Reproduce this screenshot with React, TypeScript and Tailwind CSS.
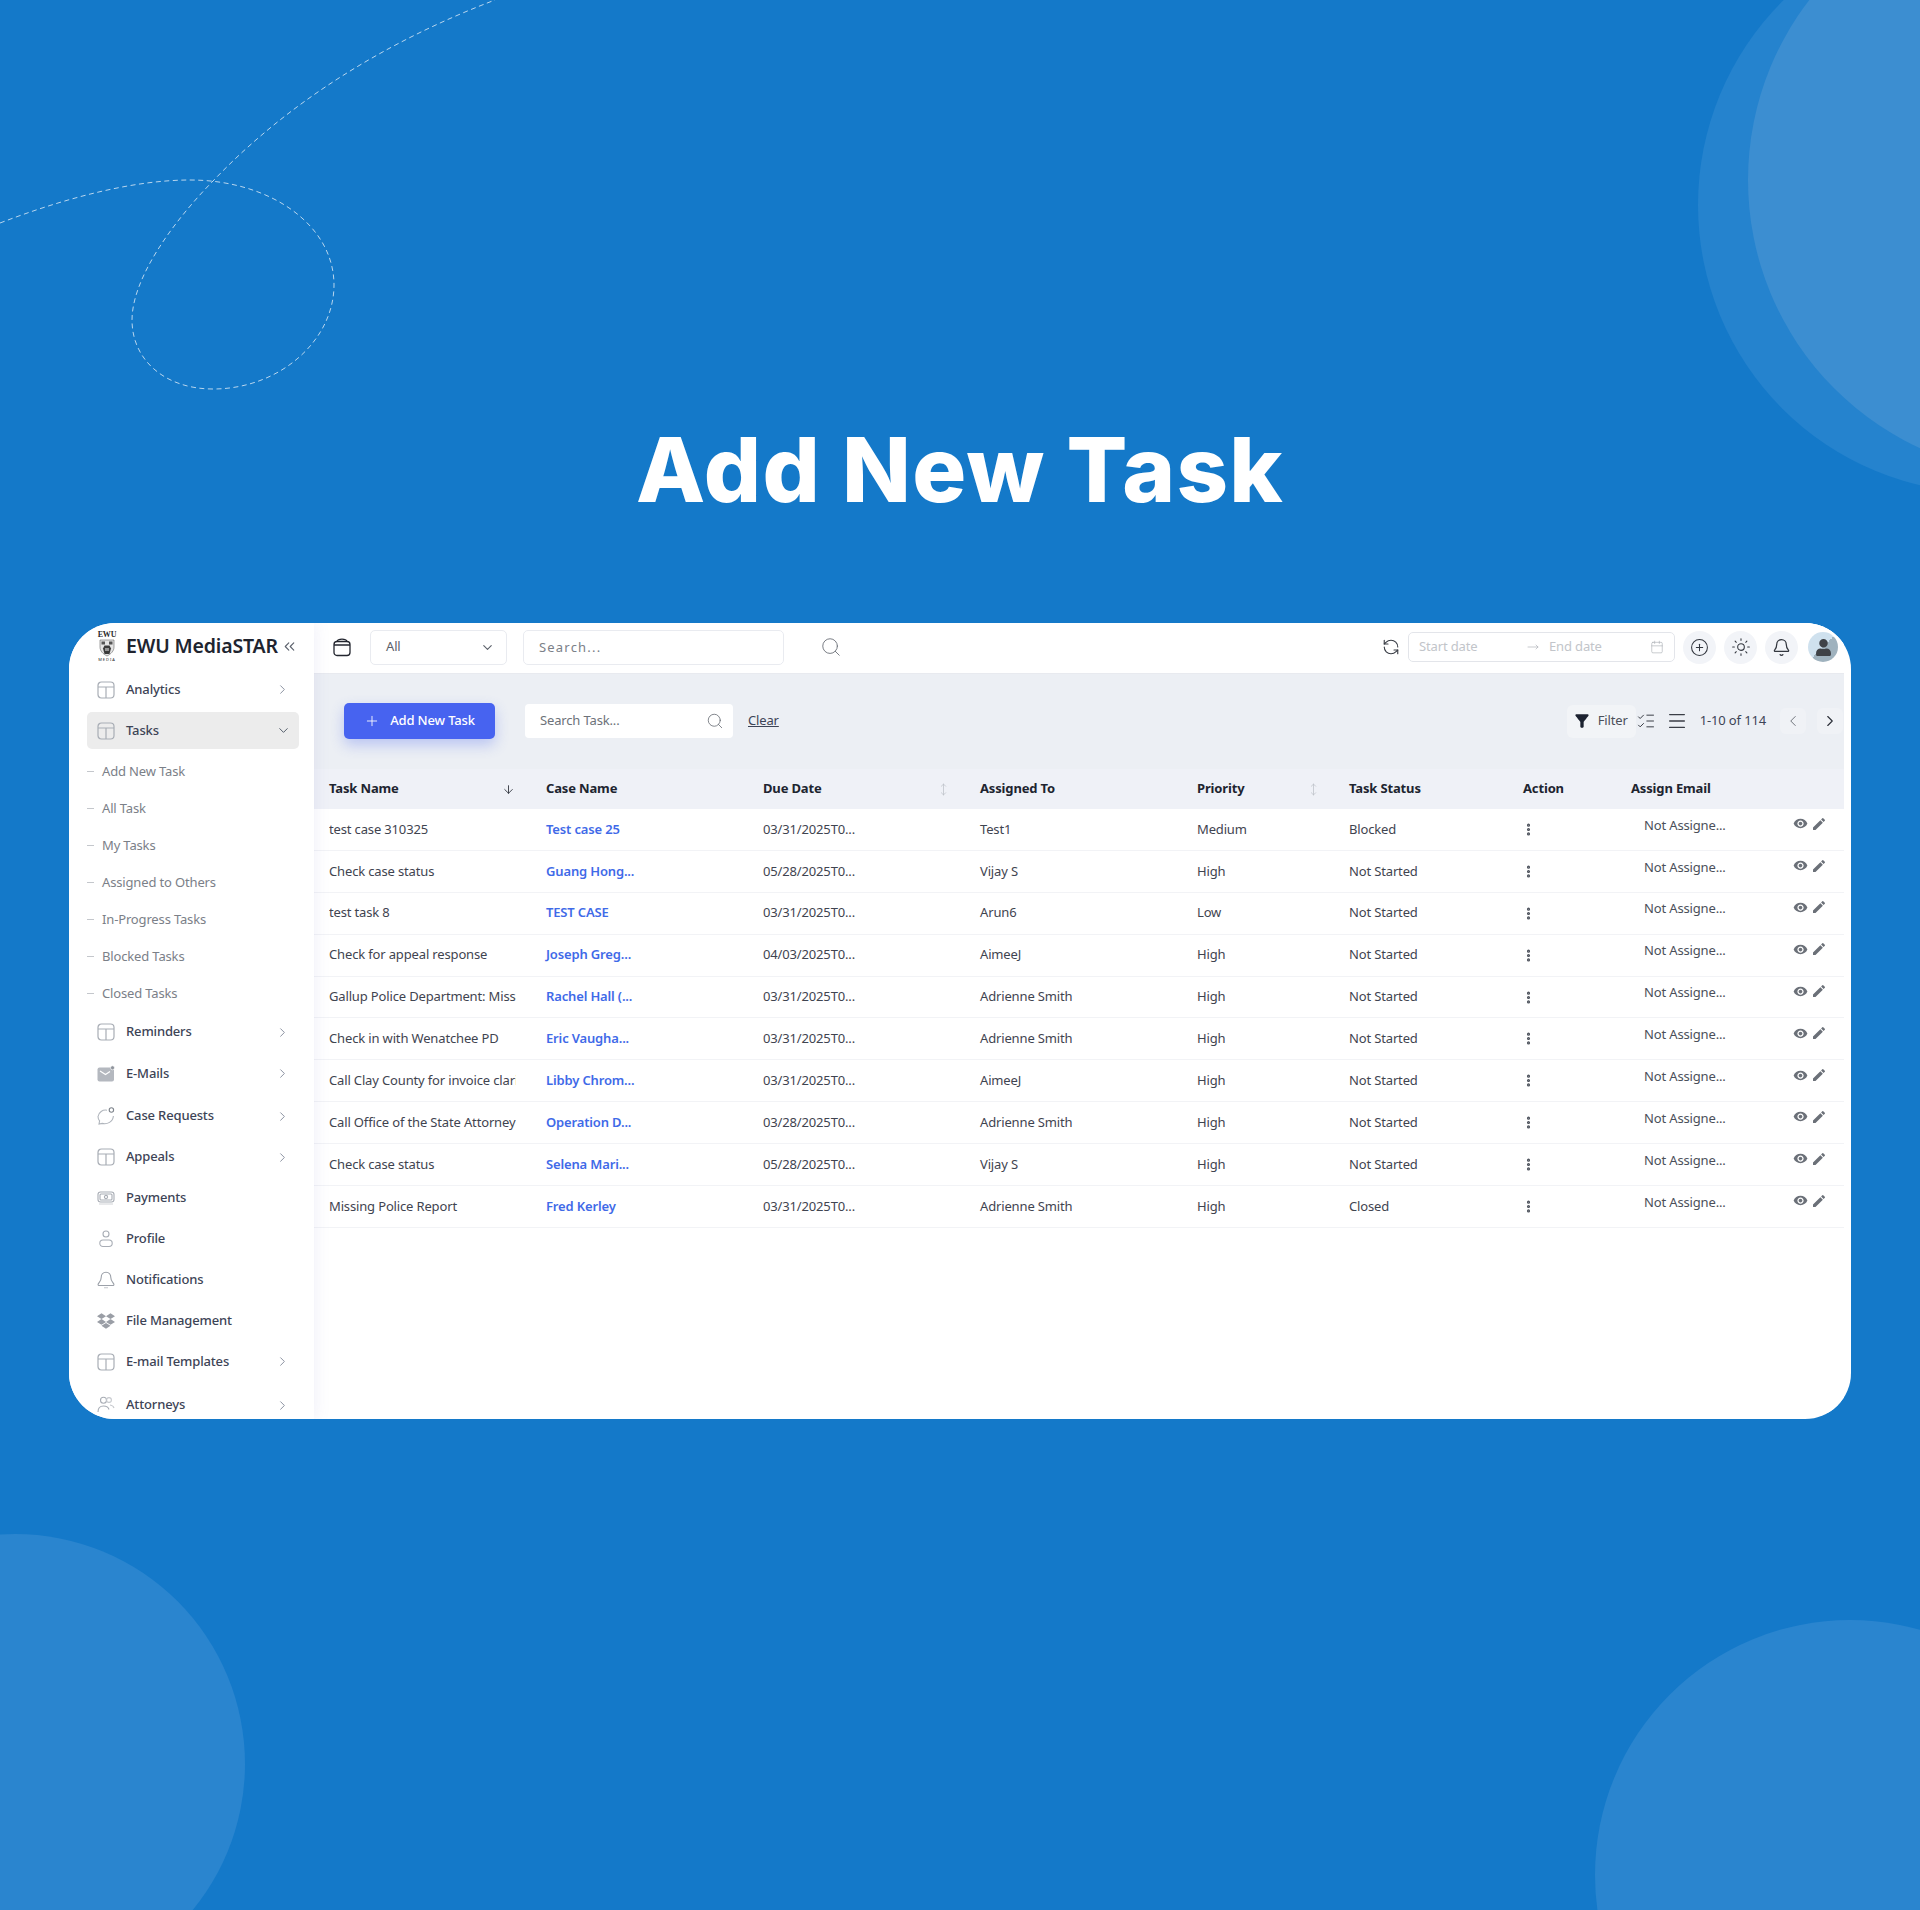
import React from "react";
import {
  ArrowDown, Bell, ChevronDown, ChevronLeft, ChevronRight, ChevronsLeft, CirclePlus, EllipsisVertical,
  ListChecks, Menu, MoveRight, MoveVertical, Plus, RefreshCcw, Search, Sun, Calendar,
} from "lucide-react";
import { FaDropbox, FaUser } from "react-icons/fa";
import { MdEdit, MdFilterAlt, MdVisibility } from "react-icons/md";

const TableIcon = () => (
  <svg width="18" height="18" viewBox="0 0 18 18" fill="none" stroke="#a8adb5" strokeWidth="1.2">
    <rect x="1" y="1" width="16" height="16" rx="3.5" />
    <path d="M1 6h16M9 6v11" />
  </svg>
);
const MailIcon = () => (
  <svg width="18" height="18" viewBox="0 0 18 18">
    <rect x="0.5" y="2.5" width="16.5" height="14" rx="2" fill="#b4b8bf" />
    <path d="M3 6l5.5 3.5L13 6.5" fill="none" stroke="#fff" strokeWidth="1.2" />
    <circle cx="15.5" cy="2.8" r="2" fill="#8f949c" stroke="#fff" strokeWidth="0.6" />
  </svg>
);
const BubbleIcon = () => (
  <svg width="18" height="18" viewBox="0 0 18 18" fill="none" stroke="#b0b5bc" strokeWidth="1.1">
    <path d="M10 3.2A7.6 7.6 0 0 0 1 9.5c0 2 .8 3.4 1.6 4.4L2 17l3.2-.6c5 1.3 10.8-1.6 11.2-7.4" />
    <circle cx="14.4" cy="3" r="2.2" stroke="#7e848c" />
  </svg>
);
const MoneyIcon = () => (
  <svg width="18" height="18" viewBox="0 0 18 18" fill="none" stroke="#a8adb5" strokeWidth="1.1">
    <rect x="1" y="3" width="16" height="10" rx="2.5" />
    <rect x="3" y="5" width="12" height="6" rx="1" />
    <circle cx="9" cy="8" r="1.6" />
    <path d="M2 15h14" stroke="#d5d7db" />
  </svg>
);
const ProfileIcon = () => (
  <svg width="18" height="18" viewBox="0 0 18 18" fill="none" stroke="#a8adb5" strokeWidth="1.1">
    <circle cx="9" cy="4" r="3" />
    <rect x="2.8" y="10" width="12.4" height="6.5" rx="3.2" />
  </svg>
);
const BellIcon = () => (
  <svg width="18" height="18" viewBox="0 0 18 18" fill="none" stroke="#9ca1a9" strokeWidth="1.1">
    <path d="M9 1.2c-3.2 0-4.8 2.4-4.8 5.200 0 3.600-2.200 5-3 6.600-.4.9.2 1.500 1 1.500h13.600c.8 0 1.400-.6 1-1.500-.8-1.600-3-3-3-6.600C13.800 3.600 12.200 1.200 9 1.200z" />
    <path d="M7 16.800h4" stroke="#c4c7cc" />
  </svg>
);
const PeopleIcon = () => (
  <svg width="18" height="18" viewBox="0 0 18 18" fill="none" stroke="#a8adb5" strokeWidth="1.1">
    <circle cx="6.500" cy="4.200" r="3" />
    <circle cx="12" cy="4" r="2.400" stroke="#c6c9ce" />
    <path d="M1 16c0-4 2.500-6 5.500-6s5 1.500 5.500 3.500" />
    <path d="M13 9c2 .3 3.500 1.200 4 3" stroke="#c6c9ce" />
  </svg>
);
const CardIcon = () => (
  <svg width="18" height="19" viewBox="0 0 18 19" fill="none" stroke="#23262f" strokeWidth="1.3">
    <rect x="1" y="3.500" width="16" height="14" rx="3" />
    <path d="M1 7h16" />
    <path d="M4 3.500C4.500 2 6 1.200 9 1.200s4.500.8 5 2.300" />
  </svg>
);
const Logo = () => (
  <div className="flex w-[20px] flex-col items-center leading-none text-[#2a2a2a]">
    <span className="text-[8px] font-bold leading-[8px] [font-family:'Liberation_Serif',serif]">EWU</span>
    <svg width="18" height="18" viewBox="0 0 17 18">
      <path d="M1.500 1h14v7c0 4-3 7-7 9C4.500 15 1.500 12 1.500 8z" fill="#e4e4e4" stroke="#666" strokeWidth="0.6" />
      <path d="M3 2.500h3.500v3H3zM10.500 2.500H14v3h-3.500z" fill="#555" />
      <path d="M6 6.500h5l1.500 3-1.500 5.500H6l-1.500-5.500z" fill="#3a3a3a" />
      <path d="M7 9h1v3H7zM9 9h1v3H9z" fill="#eee" />
    </svg>
    <span className="mt-[1px] text-[4px] leading-[4px] tracking-[1px]">MEDIA</span>
  </div>
);

type Item = { label: string; icon: React.ReactNode; h: string; chevron?: boolean };

const Row = ({ label, icon, h, chevron }: Item) => (
  <div className={`flex items-center pl-[28px] pr-[24px] ${h}`}>
    <span className="flex w-[18px] shrink-0 justify-center">{icon}</span>
    <span className="ml-[11px] flex-1 text-[13px] font-medium text-[#3d4456]">{label}</span>
    {chevron && <ChevronRight size={15} strokeWidth={1.4} className="text-[#7b8494]" />}
  </div>
);

const subItems = ["Add New Task", "All Task", "My Tasks", "Assigned to Others", "In-Progress Tasks", "Blocked Tasks", "Closed Tasks"];

const lower: Item[] = [
  { label: "Reminders", icon: <TableIcon />, h: "h-[40px]", chevron: true },
  { label: "E-Mails", icon: <MailIcon />, h: "h-[43px]", chevron: true },
  { label: "Case Requests", icon: <BubbleIcon />, h: "h-[42px]", chevron: true },
  { label: "Appeals", icon: <TableIcon />, h: "h-[40px]", chevron: true },
  { label: "Payments", icon: <MoneyIcon />, h: "h-[41px]" },
  { label: "Profile", icon: <ProfileIcon />, h: "h-[41px]" },
  { label: "Notifications", icon: <BellIcon />, h: "h-[41px]" },
  { label: "File Management", icon: <FaDropbox size={18} className="text-[#9a9ea6]" />, h: "h-[41px]" },
  { label: "E-mail Templates", icon: <TableIcon />, h: "h-[41px]", chevron: true },
  { label: "Attorneys", icon: <PeopleIcon />, h: "h-[46px]", chevron: true },
];

const rows = [
  ["test case 310325", "Test case 25", "03/31/2025T0...", "Test1", "Medium", "Blocked"],
  ["Check case status", "Guang Hong...", "05/28/2025T0...", "Vijay S", "High", "Not Started"],
  ["test task 8", "TEST CASE", "03/31/2025T0...", "Arun6", "Low", "Not Started"],
  ["Check for appeal response", "Joseph Greg...", "04/03/2025T0...", "AimeeJ", "High", "Not Started"],
  ["Gallup Police Department: Missi", "Rachel Hall (...", "03/31/2025T0...", "Adrienne Smith", "High", "Not Started"],
  ["Check in with Wenatchee PD", "Eric Vaugha...", "03/31/2025T0...", "Adrienne Smith", "High", "Not Started"],
  ["Call Clay County for invoice clari", "Libby Chrom...", "03/31/2025T0...", "AimeeJ", "High", "Not Started"],
  ["Call Office of the State Attorney", "Operation D...", "03/28/2025T0...", "Adrienne Smith", "High", "Not Started"],
  ["Check case status", "Selena Mari...", "05/28/2025T0...", "Vijay S", "High", "Not Started"],
  ["Missing Police Report", "Fred Kerley", "03/31/2025T0...", "Adrienne Smith", "High", "Closed"],
];

const cols = "grid grid-cols-[217px_217px_217px_217px_152px_174px_108px_213px] pl-[15px]";

const HeadCell = ({ label, sort, w = "w-[187px]" }: { label: string; sort?: React.ReactNode; w?: string }) => (
  <div className={`flex items-center justify-between text-[13px] font-bold text-[#20242f] ${w}`}>
    <span>{label}</span>
    {sort}
  </div>
);

const RoundBtn = ({ children }: { children: React.ReactNode }) => (
  <div className="flex h-[33px] w-[33px] items-center justify-center rounded-full bg-[#f2f4f8] text-[#33373f]">{children}</div>
);

export default function App() {
  return (
    <div className="relative h-[1910px] w-[1920px] overflow-hidden bg-[#1479c9] [font-family:'Noto_Sans',sans-serif]">
      <div className="absolute left-[1698px] top-[-83px] h-[576px] w-[576px] rounded-full bg-[#2583ce]" />
      <div className="absolute left-[1748px] top-[-115px] h-[590px] w-[590px] rounded-full bg-[#3c8ed1]" />
      <div className="absolute left-[-215px] top-[1534px] h-[460px] w-[460px] rounded-full bg-[#2a85cf]" />
      <div className="absolute left-[1595px] top-[1620px] h-[510px] w-[510px] rounded-full bg-[#2a85cf]" />
      <svg className="absolute left-0 top-0" width="520" height="400" fill="none">
        <path
          d="M0 223C60 200 130 180 190 180C270 180 334 225 334 285C334 340 280 389 213 389C165 389 132 360 132 320C132 280 170 225 213 181C290 100 390 40 495 0"
          stroke="#b9d6ee"
          strokeWidth="1"
          strokeDasharray="5 3.500"
        />
      </svg>

      <div className="relative flex h-[623px] flex-col items-center">
        <h1 className="mt-[420px] text-[90px] font-extrabold leading-[100px] tracking-[1.3px] text-white [font-family:Inter,sans-serif]">
          Add New Task
        </h1>
      </div>

      <div className="relative ml-[69px] flex h-[796px] w-[1782px] overflow-hidden rounded-[46px] bg-white tracking-[-0.15px]">
        <aside className="relative z-10 flex w-[245px] shrink-0 flex-col overflow-hidden bg-white shadow-[2px_0_14px_rgba(120,120,200,0.10)]">
          <div className="flex h-[46px] shrink-0 items-center pl-[28px]">
            <Logo />
            <span className="ml-[9px] text-[19.5px] font-semibold text-[#20242f]">EWU MediaSTAR</span>
            <ChevronsLeft size={17} strokeWidth={1.6} className="ml-[3px] text-[#5b616c]" />
          </div>
          <Row label="Analytics" icon={<TableIcon />} h="h-[41px] shrink-0" chevron />
          <div className="flex h-[41px] shrink-0 items-center pl-[18px]">
            <div className="flex h-[37px] w-[212px] shrink-0 items-center rounded-[5px] bg-[#ececec] pl-[10px] pr-[8px]">
              <span className="flex w-[18px] justify-center"><TableIcon /></span>
              <span className="ml-[11px] flex-1 text-[13px] font-medium text-[#3d4456]">Tasks</span>
              <ChevronDown size={15} strokeWidth={1.5} className="text-[#4b5563]" />
            </div>
          </div>
          <div className="mt-[2px] flex shrink-0 flex-col">
            {subItems.map((s) => (
              <div key={s} className="flex h-[37px] items-center pl-[18px]">
                <span className="h-[1px] w-[7px] bg-[#c4c7cc]" />
                <span className="ml-[8px] text-[13px] text-[#7b8088]">{s}</span>
              </div>
            ))}
          </div>
          {lower.map((it) => (
            <div key={it.label} className="shrink-0"><Row {...it} /></div>
          ))}
        </aside>

        <div className="flex h-[790px] w-[1530px] shrink-0 flex-col bg-white">
          <header className="flex h-[51px] shrink-0 items-center border-b border-[#e8eaef] bg-white pb-[2px] pl-[19px]">
            <CardIcon />
            <div className="ml-[19px] flex h-[35px] w-[137px] items-center justify-between rounded-[5px] border border-[#e9ebf0] pl-[15px] pr-[11px] text-[13px] text-[#5c616a]">
              <span>All</span>
              <ChevronDown size={15} strokeWidth={1.8} className="text-[#5c616a]" />
            </div>
            <input
              placeholder="Search..."
              className="ml-[16px] h-[35px] w-[261px] rounded-[5px] border border-[#e9ebf0] pl-[15px] text-[13px] tracking-[1.2px] outline-none placeholder:text-[#7b8088]"
            />
            <Search size={22} strokeWidth={1} className="ml-[36px] text-[#6d7279]" />
            <div className="flex-1" />
            <RefreshCcw size={18} strokeWidth={1.5} className="text-[#3a3e46]" />
            <div className="ml-[8px] flex h-[30px] w-[267px] items-center rounded-[5px] border border-[#e3e5ea] pl-[10px] pr-[10px] text-[13px] text-[#c2c5ca]">
              <span className="w-[108px]">Start date</span>
              <MoveRight size={12} strokeWidth={1.2} className="text-[#a4a8ae]" />
              <span className="ml-[10px] flex-1">End date</span>
              <Calendar size={14} strokeWidth={1} className="text-[#a4a8ae]" />
            </div>
            <div className="ml-[8px] flex items-center gap-[8px]">
              <RoundBtn><CirclePlus size={19} strokeWidth={1.3} /></RoundBtn>
              <RoundBtn><Sun size={20} strokeWidth={1.3} /></RoundBtn>
              <RoundBtn><Bell size={19} strokeWidth={1.6} /></RoundBtn>
            </div>
            <div className="ml-[10px] mr-[6px] flex h-[30px] w-[30px] items-center justify-center overflow-hidden rounded-full bg-[linear-gradient(135deg,#cfe1ee_50%,#9fb2be_50%)]">
              <FaUser size={17} className="text-[#3f4247]" />
            </div>
          </header>

          <div className="flex h-[95px] shrink-0 items-center bg-[#eceff4] pb-[1px] pl-[30px]">
            <button className="flex h-[36px] w-[151px] items-center justify-center gap-[10px] rounded-[5px] bg-[#4763f0] text-[13px] font-medium text-white shadow-[0_6px_14px_rgba(71,99,240,0.3)]">
              <Plus size={16} strokeWidth={1.3} />
              Add New Task
            </button>
            <div className="ml-[30px] flex h-[34px] w-[208px] items-center justify-between rounded-[4px] bg-white pl-[15px] pr-[9px]">
              <span className="text-[13px] text-[#6d7279]">Search Task...</span>
              <Search size={18} strokeWidth={1} className="text-[#5c616a]" />
            </div>
            <span className="ml-[15px] text-[13px] text-[#3d4456] underline">Clear</span>
            <div className="flex-1" />
            <div className="flex h-[33px] w-[69px] items-center rounded-[6px] bg-[#f2f4f7] pl-[5px]">
              <MdFilterAlt size={20} className="text-[#1c2230]" />
              <span className="ml-[6px] text-[13px] text-[#4b505a]">Filter</span>
            </div>
            <ListChecks size={20} strokeWidth={1.2} className="text-[#3a3e46]" />
            <Menu size={22} strokeWidth={1.5} className="ml-[10px] text-[#3a3e46]" />
            <span className="ml-[12px] text-[13px] text-[#3d4456]">1-10 of 114</span>
            <div className="ml-[14px] flex h-[26px] w-[26px] items-center justify-center rounded-[6px] bg-[#f0f2f6]">
              <ChevronLeft size={18} strokeWidth={1.3} className="text-[#6d7279]" />
            </div>
            <div className="ml-[11px] flex h-[26px] w-[26px] items-center justify-center rounded-[6px] bg-[#f0f2f6]">
              <ChevronRight size={18} strokeWidth={1.5} className="text-[#2a2e38]" />
            </div>
            <div className="w-[1px]" />
          </div>

          <div className={`${cols} h-[40px] shrink-0 items-center bg-[#eff1f7]`}>
            <HeadCell label="Task Name" w="w-[186px]" sort={<ArrowDown size={13} strokeWidth={1.6} className="text-[#2a2e38]" />} />
            <HeadCell label="Case Name" />
            <HeadCell label="Due Date" w="w-[187px]" sort={<MoveVertical size={13} strokeWidth={1.3} className="text-[#b9bdc4]" />} />
            <HeadCell label="Assigned To" />
            <HeadCell label="Priority" w="w-[123px]" sort={<MoveVertical size={13} strokeWidth={1.3} className="text-[#b9bdc4]" />} />
            <HeadCell label="Task Status" w="w-[150px]" />
            <HeadCell label="Action" w="w-[100px]" />
            <HeadCell label="Assign Email" />
          </div>

          {rows.map((r, i) => (
            <div key={i} className={`${cols} h-[41.9px] shrink-0 items-center border-b border-[#f2f3f6] text-[13px] text-[#3f4450]`}>
              <div className="w-[187px] overflow-hidden whitespace-nowrap">{r[0]}</div>
              <div className="font-semibold text-[#3f6ae8]">{r[1]}</div>
              <div>{r[2]}</div>
              <div>{r[3]}</div>
              <div>{r[4]}</div>
              <div>{r[5]}</div>
              <div className="-ml-[2px]"><EllipsisVertical size={15} strokeWidth={3} className="text-[#4b505a]" /></div>
              <div className="flex items-start justify-between pb-[8px] pl-[13px] pr-[17px]">
                <span className="text-[#4b505a]">Not Assigne...</span>
                <span className="flex items-center gap-[3px] text-[#6b7078]">
                  <MdVisibility size={15} />
                  <MdEdit size={16} />
                </span>
              </div>
            </div>
          ))}
        </div>
      </div>
    </div>
  );
}
